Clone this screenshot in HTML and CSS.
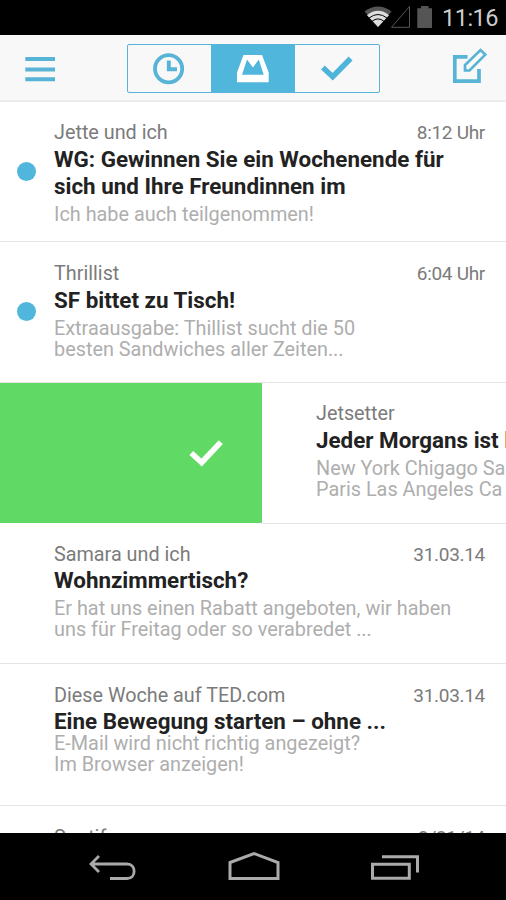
FILE: index.html
```html
<!DOCTYPE html>
<html lang="de">
<head>
<meta charset="utf-8">
<title>Posteingang</title>
<link rel="stylesheet" href="styles.css">
</head>
<body>
<div class="phone">
  <div class="status">
    <svg class="status-icons" width="69" height="26" viewBox="365 3 69 26">
      <path fill="#555" d="M365.500 11.500Q379 1.500 392.500 11.500L379 27Z"/>
      <path fill="#ddd" d="M368 15.200Q379 6.500 390 15.200L379 27Z"/>
      <path fill="none" stroke="#000" stroke-width="1" d="M370 18Q379 11 388 18M373 21.300Q379 16.500 385 21.300"/>
      <path fill="none" stroke="#555" d="M410.500 6.500V27.300H392.500Z"/>
      <path fill="#555" d="M418.300 8.300H422V6H429.500V8.300H433V28H418.300Z"/>
    </svg>
    <span class="clock">11:16</span>
  </div>
  <header class="toolbar">
    <svg class="menu" width="30" height="26" viewBox="25 57 30 26"><path fill="#58b4d6" d="M25.300 57H55v4H25.300zM25.300 67.500H55v4H25.300zM25.300 77.300H55v4H25.300z"/></svg>
    <div class="tabs">
      <div class="tab">
        <svg width="32" height="32" viewBox="154 53 32 32" fill="none" stroke="#58b4d6"><circle cx="169.600" cy="68.800" r="13.600" stroke-width="3.800"/><path stroke-width="3.900" d="M169.800 60.500V69.200H178"/></svg>
      </div>
      <div class="tab active">
        <svg width="32" height="28" viewBox="237 55 32 28"><path fill="#fff" fill-rule="evenodd" d="M243.500 55H262L268.700 72.500V82.300H237V72.500ZM247 59.500L242 74.700H263.700L258.800 59.500L253 67.500Z"/></svg>
      </div>
      <div class="tab">
        <svg width="32" height="25" viewBox="321 57 32 25"><path fill="none" stroke="#4fb4da" stroke-width="5.500" d="M322.800 68.500L332.700 77.700L350.600 59.500"/></svg>
      </div>
    </div>
    <svg class="compose" width="36" height="36" viewBox="452 48 36 36" fill="none" stroke="#58b4d6"><path stroke-width="3.700" d="M467.500 56.800H454.800V81.100H479V69"/><path stroke-width="2.700" d="M465 70.500V65L480.500 50L485.300 54.600L469.500 70.500Z"/></svg>
  </header>
  <main class="list">
    <article class="mail tall">
      <i class="dot"></i>
      <div class="line"><span class="sender">Jette und ich</span><time>8:12 Uhr</time></div>
      <h2>WG: Gewinnen Sie ein Wochenende für<br>sich und Ihre Freundinnen im</h2>
      <p>Ich habe auch teilgenommen!</p>
    </article>
    <article class="mail second">
      <i class="dot"></i>
      <div class="line"><span class="sender">Thrillist</span><time>6:04 Uhr</time></div>
      <h2>SF bittet zu Tisch!</h2>
      <p>Extraausgabe: Thillist sucht die 50<br>besten Sandwiches aller Zeiten...</p>
    </article>
    <div class="swiped">
      <div class="done"><svg width="35" height="28" viewBox="189 439 35 28"><path fill="none" stroke="#fff" stroke-width="5.600" d="M191.300 453L201.700 462.500L220.800 442.200"/></svg></div>
      <article class="mail shifted">
        <div class="line"><span class="sender">Jetsetter</span></div>
        <h2>Jeder Morgans ist los</h2>
        <p>New York Chigago Sa<br>Paris Las Angeles Ca</p>
      </article>
    </div>
    <article class="mail fourth">
      <div class="line"><span class="sender">Samara und ich</span><time>31.03.14</time></div>
      <h2>Wohnzimmertisch?</h2>
      <p>Er hat uns einen Rabatt angeboten, wir haben<br>uns für Freitag oder so verabredet ...</p>
    </article>
    <article class="mail ted">
      <div class="line"><span class="sender">Diese Woche auf TED.com</span><time>31.03.14</time></div>
      <h2>Eine Bewegung starten – ohne ...</h2>
      <p>E-Mail wird nicht richtig angezeigt?<br>Im Browser anzeigen!</p>
    </article>
    <article class="mail last">
      <div class="line"><span class="sender">Spotify</span><time>3/31/14</time></div>
    </article>
  </main>
  <nav class="nav">
    <svg width="48" height="28" viewBox="88 854 48 28" fill="none" stroke="#aaa" stroke-width="2.800"><path d="M99 857L91 865L99 873M91 865H127C136.500 865 136.500 879.500 127 879.500H110"/></svg>
    <svg width="52" height="30" viewBox="227 852 52 30" fill="none" stroke="#aaa" stroke-width="3"><path d="M229 863.500L253 854.500L277 863.500V879.500H229Z"/></svg>
    <svg width="49" height="26" viewBox="371 856 49 26" fill="none" stroke="#aaa" stroke-width="3"><path d="M372.500 865.200H409.300V879.300H372.500ZM382 857.700H417.500V873.500"/></svg>
  </nav>
</div>
</body>
</html>
```
FILE: styles.css
```css
* { box-sizing: border-box; }
body { margin: 0; font-family: Roboto, "Liberation Sans", sans-serif; }
.phone { width: 506px; height: 900px; display: flex; flex-direction: column; overflow: hidden; background: #fff; }
svg { display: block; flex: none; }
.status { height: 35px; flex: none; background: #000; display: flex; justify-content: flex-end; align-items: flex-start; padding: 3px 8px 0 0; }
.clock { width: 56px; margin-left: 9px; color: #ccc; font-size: 23.5px; line-height: 31px; letter-spacing: -0.5px; text-align: right; white-space: nowrap; }
.toolbar { height: 67px; flex: none; background: #f8f8f8; border-bottom: 2px solid #ebebeb; display: flex; justify-content: space-between; align-items: flex-start; padding: 9px 18px 0 25px; }
.menu { margin-top: 13px; }
.compose { margin-top: 4px; }
.tabs { display: flex; width: 253px; height: 49px; margin-left: 54px; margin-right: 55px; border: 1.5px solid #58b4d6; border-radius: 2px; }
.tab { flex: 1; display: flex; align-items: center; justify-content: center; }
.tab.active { background: #50b6dc; }
.list { flex: 1; min-height: 0; overflow: hidden; }
.mail { position: relative; height: 141px; border-bottom: 1px solid #e4e4e4; padding: 18px 21px 0 54px; white-space: nowrap; overflow: hidden; }
.tall { height: 140px; }
.second { padding-top: 19px; }
.fourth { height: 140px; }
.ted { height: 142px; padding-top: 19px; }
.last { padding-top: 19px; }
.dot { position: absolute; left: 17px; top: 60px; width: 19px; height: 19px; border-radius: 50%; background: #50b6dc; }
.line { display: flex; justify-content: space-between; height: 26px; line-height: 26px; color: #7b7b7b; font-size: 19.8px; }
.line time { font-size: 19px; letter-spacing: -0.3px; }
.mail h2 { margin: 0; font-size: 22.4px; line-height: 27px; font-weight: 700; color: #222; }
.mail p { margin: 4px 0 0; font-size: 19.85px; line-height: 21px; color: #aeaeae; }
.fourth h2, .ted h2 { margin-top: -1px; }
.ted p { margin-top: -2px; }
.swiped { display: flex; height: 141px; }
.done { width: 262px; height: 140px; flex: none; background: #61d965; display: flex; align-items: center; justify-content: flex-end; padding-right: 38px; }
.shifted { flex: 1; min-width: 0; padding-right: 0; }
.nav { height: 67px; flex: none; background: #000; display: flex; justify-content: space-between; align-items: flex-end; padding: 0 86px 19px 88px; }
```
